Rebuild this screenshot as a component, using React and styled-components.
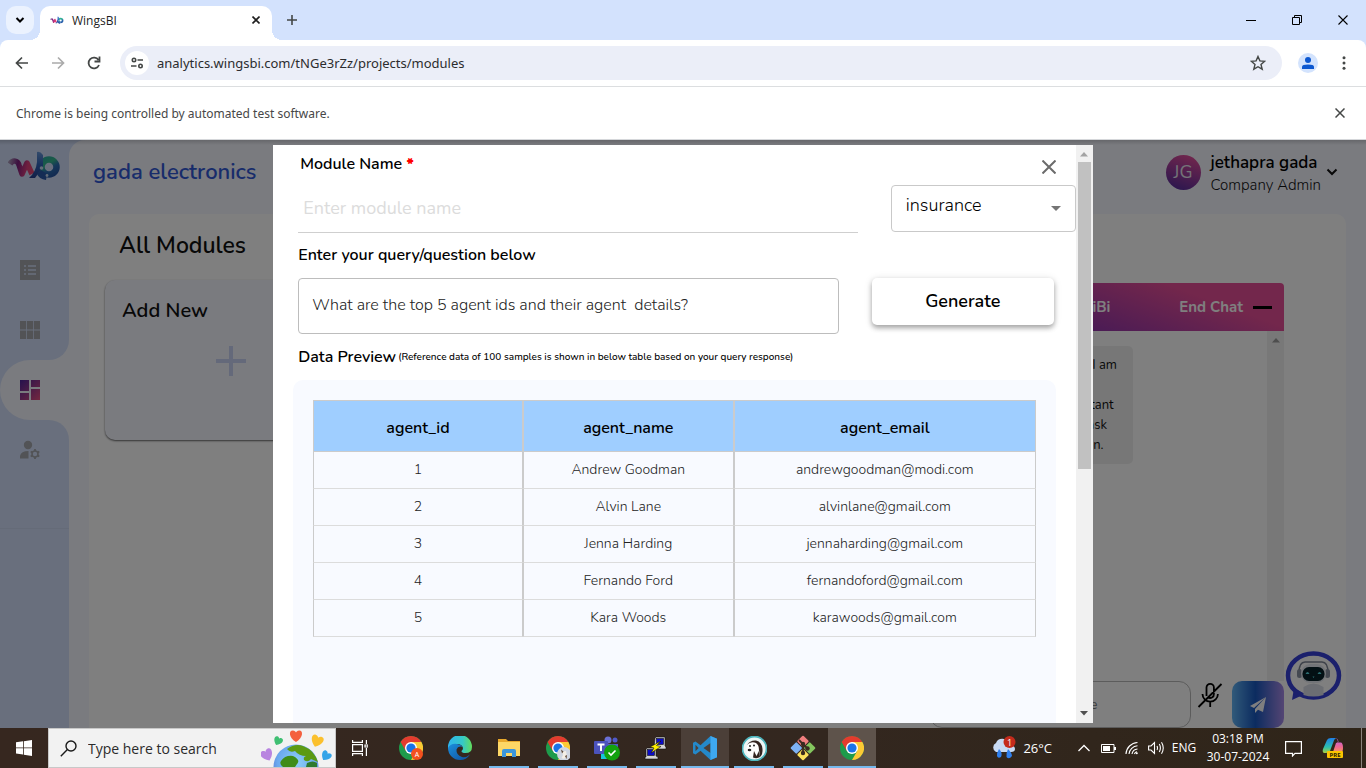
import React from "react";
import styled, { createGlobalStyle } from "styled-components";

const APP_FONT = `Nunito, Lato, "Open Sans", sans-serif`;
const UI_FONT = `"Segoe UI", "Open Sans", "Noto Sans", sans-serif`;
const BAR_FONT = `"Segoe UI", "Noto Sans", "Open Sans", sans-serif`;
const RAIL = "#d2dffa";
const PAGE = "#f4f6ff";

const Global = createGlobalStyle`
  *, *::before, *::after { box-sizing: border-box; }
  body { margin: 0; font-family: ${UI_FONT}; }
  button, input, select, textarea { font: inherit; color: inherit; }
  button { border: 0; padding: 0; background: none; cursor: pointer; }
  svg { display: block; flex: none; }
  h1, h2, h3, p { margin: 0; }
`;

const Screen = styled.div`
  height: 100vh;
  display: flex;
  flex-direction: column;
  overflow: hidden;
`;

/* ---------- browser chrome ---------- */

const TabStrip = styled.header`
  height: 40px;
  flex: none;
  display: flex;
  background: #d3e2fd;
`;

const TabSearch = styled.button`
  width: 28px;
  height: 28px;
  margin: 6px;
  border-radius: 10px;
  background: #ebf2fe;
  display: grid;
  place-items: center;
`;

const Tab = styled.div`
  position: relative;
  width: 232px;
  height: 34px;
  margin-top: 6px;
  padding: 0 8px 6px 10px;
  display: flex;
  align-items: center;
  gap: 8px;
  border-radius: 10px 10px 0 0;
  background: #fff;
  font-size: 12px;
  color: #1f1f1f;

  &::before, &::after {
    content: "";
    position: absolute;
    bottom: 0;
    width: 10px;
    height: 10px;
  }
  &::before {
    left: -10px;
    background: radial-gradient(circle at 0 0, transparent 10px, #fff 10px);
  }
  &::after {
    right: -10px;
    background: radial-gradient(circle at 100% 0, transparent 10px, #fff 10px);
  }
  span { flex: 1; }
`;

const IconButton = styled.button`
  width: ${(p) => p.$w || 28}px;
  height: ${(p) => p.$h || 28}px;
  display: grid;
  place-items: center;
  flex: none;
  color: ${(p) => p.$color || "#444746"};
`;

const NewTab = styled(IconButton)`
  margin: 6px;
`;

const WindowControls = styled.div`
  margin-left: auto;
  display: flex;
`;

const ToolbarBack = styled.div`
  background: #d3e2fd;
  flex: none;
`;

const Toolbar = styled.nav`
  height: 47px;
  padding: 0 8px;
  display: flex;
  align-items: center;
  gap: 8px;
  border-bottom: 1px solid #dcdee0;
  border-radius: 8px 8px 0 0;
  background: #fff;
`;

const Address = styled.div`
  flex: 1;
  height: 34px;
  margin-left: 4px;
  padding: 0 10px 0 5px;
  display: flex;
  align-items: center;
  gap: 8px;
  border-radius: 17px;
  background: #ebeef8;

  input {
    flex: 1;
    min-width: 0;
    border: 0;
    padding: 0;
    outline: 0;
    background: none;
    font-family: ${BAR_FONT};
    font-size: 13px;
    color: #2b2c2e;
  }
`;

const SiteInfo = styled(IconButton)`
  width: 24px;
  height: 24px;
  border-radius: 50%;
  background: #fff;
`;

const Profile = styled.button`
  width: 20px;
  height: 20px;
  margin: 0 4px 0 8px;
  border-radius: 50%;
  background: #d3e3fd;
  display: grid;
  place-items: center;
`;

const InfoBar = styled.div`
  height: 53px;
  flex: none;
  padding: 0 12px 0 16px;
  display: flex;
  align-items: center;
  justify-content: space-between;
  border-bottom: 1px solid #d5d7da;
  background: #fff;
  font-family: ${BAR_FONT};
  font-size: 12px;
  color: #474747;
`;

/* ---------- application ---------- */

const AppArea = styled.div`
  position: relative;
  flex: 1;
  min-height: 0;
  display: flex;
  overflow: hidden;
  background: ${RAIL};
  font-family: ${APP_FONT};
`;

const Rail = styled.aside`
  width: 69px;
  flex: none;
  display: flex;
  flex-direction: column;
  background: ${PAGE};
  color: #a4a6ac;
`;

const RailTop = styled.div`
  height: 220px;
  padding: 8px 0 0 8px;
  display: flex;
  flex-direction: column;
  border-bottom-right-radius: 20px;
  background: ${RAIL};
`;

const RailLink = styled.a`
  height: 60px;
  padding-left: 20px;
  display: flex;
  align-items: center;
  color: inherit;
`;

const RailLinks = styled.div`
  margin: auto 0 0 -8px;
`;

const RailActive = styled.div`
  background: ${RAIL};
  ${RailLink} {
    border-radius: 30px 0 0 30px;
    background: ${PAGE};
  }
`;

const RailBottom = styled.div`
  flex: 1;
  border-top-right-radius: 20px;
  background: ${RAIL};
`;

const RailRule = styled.div`
  height: 49px;
  border-bottom: 1px solid #cbd6f0;
`;

const Main = styled.main`
  flex: 1;
  min-width: 0;
  padding: 0 20px;
  display: flex;
  flex-direction: column;
  border-top-left-radius: 16px;
  background: ${PAGE};
`;

const PageHeader = styled.header`
  height: 64px;
  margin-bottom: 10px;
  padding: 0 8px 0 4px;
  display: flex;
  align-items: center;
  justify-content: space-between;
  flex: none;
`;

const Company = styled.h1`
  font-size: 22px;
  font-weight: 600;
  line-height: 28px;
  color: #3158d6;
`;

const User = styled.button`
  display: flex;
  align-items: center;
  gap: 10px;
  text-align: left;
  color: #111;
  > svg { margin-left: -5px; }
`;

const Avatar = styled.span`
  width: 35px;
  height: 35px;
  border-radius: 50%;
  display: grid;
  place-items: center;
  background: linear-gradient(200deg, #f0509a, #4a2a9e);
  color: #e8e8f0;
  font-size: 18px;
`;

const UserText = styled.span`
  display: grid;
  padding-top: 4px;
  strong { font-size: 17px; line-height: 22px; font-weight: 600; color: #000; }
  small { font-size: 15px; line-height: 22px; font-weight: 300; }
`;

const Board = styled.section`
  flex: 1;
  min-height: 0;
  padding: 0 62px 0 16px;
  display: flex;
  justify-content: space-between;
  border-radius: 10px 10px 0 0;
  background: #fff;
`;

const Modules = styled.div`
  padding-top: 17px;
  h2 { padding-left: 14px; margin-bottom: 19px; font-size: 23px; line-height: 30px; font-weight: 600; color: #111; }
`;

const AddCard = styled.button`
  width: 252px;
  height: 160px;
  padding: 17px;
  display: flex;
  flex-direction: column;
  align-items: flex-start;
  border-radius: 10px;
  background: ${PAGE};
  box-shadow: 0 1px 2px rgba(0, 0, 0, 0.6);
  font-size: 20px;
  font-weight: 600;
  line-height: 28px;
  color: #111;
  svg { align-self: center; margin-top: 21px; }
`;

const Chat = styled.aside`
  width: 354px;
  margin-top: 69px;
  display: flex;
  flex-direction: column;
`;

const ChatHead = styled.header`
  height: 48px;
  padding: 0 12px 0 145px;
  display: flex;
  align-items: center;
  gap: 10px;
  border-radius: 4px 4px 0 0;
  background: linear-gradient(20deg, #7a2fb0 20%, #e64e98 75%);
  color: #fff;
  font-size: 15px;
  font-weight: 700;
  span { margin-right: auto; }
`;

const ChatBody = styled.div`
  flex: 1;
  min-height: 0;
  display: flex;
  justify-content: space-between;
`;

const Bubble = styled.p`
  width: 180px;
  height: 118px;
  margin: 15px 0 0 23px;
  padding: 9px 16px;
  border-radius: 5px;
  background: #efefef;
  font-size: 13px;
  line-height: 20px;
  text-align: right;
  white-space: pre;
  color: #111;
`;

const ScrollTrack = styled.div`
  width: 17px;
  flex: none;
  padding: 7px 0;
  display: flex;
  flex-direction: column;
  align-items: center;
  background: #f1f1f1;
`;

const ScrollThumb = styled.div`
  width: 13px;
  height: 307px;
  margin: 5px 0 auto;
  background: #c1c1c1;
`;

const ChatForm = styled.form`
  height: 47px;
  display: flex;
  input {
    width: 261px;
    padding: 0 14px;
    border: 1px solid #b8b8b8;
    border-radius: 12px;
    background: #fff;
    font-size: 14px;
    outline: 0;
  }
  input::placeholder { color: #75787c; opacity: 1; }
`;

const Mic = styled(IconButton)`
  width: 41px;
  padding-right: 3px;
  color: #000;
`;

const Send = styled.button`
  flex: 1;
  display: grid;
  place-items: center;
  border-radius: 10px;
  background: linear-gradient(90deg, #62b4f4, #1858c0 45%, #a98be8);
`;

const Bot = styled.button`
  position: absolute;
  right: 24px;
  bottom: 27px;
`;

/* ---------- dialog ---------- */

const Backdrop = styled.div`
  position: absolute;
  inset: 0;
  padding: 5px 0;
  display: flex;
  justify-content: center;
  background: linear-gradient(rgba(0, 0, 0, 0.16), transparent 5px), rgba(0, 0, 0, 0.5);
`;

const Dialog = styled.section`
  width: 60%;
  display: flex;
  background: #fff;
  overflow: hidden;
`;

const DialogBody = styled.div`
  flex: 1;
  min-width: 0;
  padding-left: 25px;
  color: #000;
  overflow: hidden;
`;

const NameRow = styled.div`
  display: flex;
  justify-content: space-between;
`;

const NameField = styled.div`
  width: 560px;
  padding-top: 8px;
  label { display: block; padding-left: 2px; font-size: 16px; line-height: 22px; font-weight: 600; }
  b { color: #f00; }
  input {
    display: block;
    width: 100%;
    height: 48px;
    margin-top: 10px;
    padding: 0 5px 2px;
    border: 0;
    border-bottom: 1px solid #cfcfcf;
    outline: 0;
    background: none;
    font-size: 18px;
  }
  input::placeholder { color: #dcdcdc; opacity: 1; }
`;

const SideField = styled.div`
  width: 185px;
  display: flex;
  flex-direction: column;
`;

const CloseDialog = styled(IconButton)`
  margin: 8px 13px 4px auto;
  color: #6b6b6b;
`;

const SelectBox = styled.div`
  position: relative;
  select {
    width: 100%;
    height: 47px;
    padding: 0 40px 8px 14px;
    border: 1px solid #c9c9c9;
    border-radius: 4px;
    appearance: none;
    background: #fff;
    outline: 0;
    font-size: 18px;
    font-weight: 350;
  }
  svg { position: absolute; right: 15px; top: 21px; pointer-events: none; }
`;

const SectionLabel = styled.label`
  display: block;
  margin-top: 11px;
  font-size: 16px;
  line-height: 22px;
  font-weight: 600;
`;

const QueryRow = styled.div`
  margin: 12px 22px 12px 0;
  display: flex;
  align-items: flex-start;
  justify-content: space-between;
  textarea {
    width: 541px;
    height: 56px;
    padding: 15px 13px;
    display: block;
    border: 1px solid #bdbdbd;
    border-radius: 4px;
    resize: none;
    outline: 0;
    overflow: hidden;
    font-size: 16px;
    font-weight: 350;
    line-height: 22px;
    color: #222;
  }
`;

const Generate = styled.button`
  width: 182px;
  height: 47px;
  padding-bottom: 2px;
  border-radius: 5px;
  background: #fff;
  box-shadow: 0 3px 5px rgba(0, 0, 0, 0.3), 0 1px 8px rgba(0, 0, 0, 0.12);
  font-size: 18px;
  font-weight: 600;
`;

const PreviewTitle = styled.h3`
  display: flex;
  align-items: center;
  gap: 2px;
  font-size: 16px;
  line-height: 22px;
  font-weight: 600;
  small { font-size: 10px; font-weight: 500; }
`;

const PreviewPanel = styled.div`
  height: 400px;
  margin: 12px 20px 0 -5px;
  padding: 20px;
  border-radius: 10px;
  background: #f8faff;
`;

const DataTable = styled.table`
  width: 100%;
  table-layout: fixed;
  border-collapse: separate;
  border-spacing: 0;
  text-align: center;

  th, td { padding: 0; border: 1px solid #cbcbcb; }
  th { height: 52px; padding-top: 4px; background: #9fceff; font-size: 16px; font-weight: 600; }
  th:first-child { width: 29%; }
  th:last-child { width: 302px; }
  td { height: 37px; padding-bottom: 2px; border-top: 0; border-bottom-color: #dcdcdc; font-size: 14px; font-weight: 350; color: #222; }
`;

/* ---------- taskbar ---------- */

const Taskbar = styled.footer`
  height: 40px;
  flex: none;
  display: flex;
  background: linear-gradient(90deg, #36271f, #33271f 60%, #2f2519);
  color: #fff;
`;

const TaskSearch = styled.label`
  width: 288px;
  padding-left: 11px;
  display: flex;
  align-items: center;
  gap: 11px;
  border: 1px solid #c8c8c8;
  background: #f2f2f2;
  color: #1a1a1a;
  input {
    flex: 1;
    min-width: 0;
    padding: 0;
    border: 0;
    outline: 0;
    background: none;
    font-size: 14px;
  }
  input::placeholder { color: #2b2b2b; opacity: 1; }
`;

const TaskIcons = styled.div`
  margin-left: 3px;
  display: flex;
  gap: 1px;
`;

const TaskButton = styled.button`
  width: 48px;
  height: 40px;
  display: grid;
  place-items: center;
  background: ${(p) => p.$bg || "none"};
  box-shadow: ${(p) => (p.$wide ? "inset 0 -2px #76b9ed" : "none")};
  background-image: ${(p) => (p.$open && !p.$wide ? "linear-gradient(#76b9ed, #76b9ed)" : "none")};
  background-size: 40px 2px;
  background-position: bottom center;
  background-repeat: no-repeat;
`;

const Tray = styled.div`
  margin-left: auto;
  display: flex;
  align-items: center;
`;

const TrayItem = styled.button`
  width: ${(p) => p.$w || 24}px;
  height: 40px;
  display: grid;
  place-items: center;
  align-content: center;
  font-size: 12px;
  line-height: 18px;
  white-space: nowrap;
`;

const Weather = styled.button`
  margin-right: 20px;
  display: flex;
  align-items: center;
  gap: 6px;
  font-size: 13px;
`;

const ShowDesktop = styled.button`
  width: 5px;
  height: 40px;
  margin-left: 5px;
  border-left: 1px solid #8a837c;
`;

/* ---------- icons ---------- */

const Line = ({ size = 16, w = 1.5, children, ...rest }) => (
  <svg width={size} height={size} viewBox={`0 0 ${size} ${size}`} fill="none" stroke="currentColor" strokeWidth={w} {...rest}>
    {children}
  </svg>
);

const Cross = ({ size = 10, w = 1.2 }) => (
  <Line size={size} w={w}>
    <path d={`M.5 .5 L${size - 0.5} ${size - 0.5} M${size - 0.5} .5 L.5 ${size - 0.5}`} />
  </Line>
);

const Brand = ({ width, height, id }) => (
  <svg width={width} height={height} viewBox="0 0 54 34" fill="none">
    <defs>
      <linearGradient id={`${id}a`} gradientUnits="userSpaceOnUse" x1="1" x2="30" y1="14" y2="20">
        <stop offset="0" stopColor="#a898b8" />
        <stop offset=".3" stopColor="#7a2080" />
        <stop offset=".65" stopColor="#e0407e" />
        <stop offset="1" stopColor="#f0506e" />
      </linearGradient>
      <linearGradient id={`${id}b`} gradientUnits="userSpaceOnUse" x1="30" x2="28" y1="3" y2="30">
        <stop offset="0" stopColor="#6a98d8" />
        <stop offset=".5" stopColor="#2f62b8" />
        <stop offset="1" stopColor="#274090" />
      </linearGradient>
      <linearGradient id={`${id}c`} gradientUnits="userSpaceOnUse" x1="36" x2="48" y1="9" y2="28">
        <stop offset="0" stopColor="#2ca8a0" />
        <stop offset=".35" stopColor="#35b890" />
        <stop offset=".6" stopColor="#2c70b4" />
        <stop offset="1" stopColor="#2450a0" />
      </linearGradient>
    </defs>
    <path d="M2 16 C5 11 10 13 11 17 L14 26 L19 15 L24 26" stroke={`url(#${id}a)`} strokeWidth="5.500" strokeLinejoin="round" />
    <circle cx="41" cy="19" r="7.500" stroke={`url(#${id}c)`} strokeWidth="6.500" />
    <path d="M29 4 Q32 3 35 7 V19 L27 30 L21 30 Q28 24 29 14 Z" fill={`url(#${id}b)`} />
    <path d="M33 22 L39 26 L38 32 Q31 31 29 26 Z" fill="#2a58a8" />
    <circle cx="33.500" cy="20" r="1.800" fill="#c9d9ef" />
    <circle cx="39" cy="27.500" r="1.400" fill="#c9d9ef" />
  </svg>
);

const ChromeLogo = ({ children }) => (
  <svg width="24" height="24" viewBox="0 0 24 24">
    <circle cx="12" cy="12" r="12" fill="#1e9b4b" />
    <path d="M12 0 A12 12 0 0 1 22.400 6 L12 6 L6.800 15 L1.600 6 A12 12 0 0 1 12 0" fill="#e33b2e" />
    <path d="M22.400 6 A12 12 0 0 1 12 24 L17.200 15 L12 6 Z" fill="#fcc934" />
    <circle cx="12" cy="12" r="6" fill="#fff" />
    <circle cx="12" cy="12" r="4.600" fill="#1a73e8" />
    {children}
  </svg>
);

const EdgeLogo = () => (
  <svg width="24" height="24" viewBox="0 0 24 24">
    <defs>
      <linearGradient id="edgeTop" x1="0" x2="1"><stop offset="0" stopColor="#2fb5ee" /><stop offset=".6" stopColor="#35c8c8" /><stop offset="1" stopColor="#62dc5c" /></linearGradient>
      <linearGradient id="edgeLow" x1="0" x2="1" y1="0" y2="1"><stop offset="0" stopColor="#1b8fdc" /><stop offset="1" stopColor="#0f4f9e" /></linearGradient>
    </defs>
    <path d="M0 11 A12 12 0 0 1 24 11 Q24 17 17.500 17 Q13.500 17 13.500 15 Q15 14 15 12 Q14 8 9 8 Q3 8 0 13 Z" fill="url(#edgeTop)" />
    <path d="M0 12 Q3 7 9 8 Q13 8.500 14.500 11 Q10 9.500 8.500 13.500 Q8 19 14 21 Q18 22 22 18.500 Q18.500 24 12 24 A12 12 0 0 1 0 12" fill="url(#edgeLow)" />
  </svg>
);

const FolderIcon = () => (
  <svg width="22" height="20" viewBox="0 0 22 20">
    <path d="M0 1 H8 L10 3 H22 V18 H0 Z" fill="#e9a92c" />
    <path d="M0 4 H22 V18 H0 Z" fill="#fdd766" />
    <path d="M4 19 V13 Q4 11 6 11 H16 Q18 11 18 13 V19 H14 V15 H8 V19 Z" fill="#3c96dc" />
  </svg>
);

const TeamsIcon = () => (
  <svg width="26" height="26" viewBox="0 0 26 26">
    <circle cx="14" cy="5" r="3.500" fill="#6a70d6" />
    <circle cx="21" cy="5" r="2.500" fill="#5059c9" />
    <path d="M10 9 H24 V17 Q22 21 18 21 H10 Z" fill="#5059c9" />
    <rect x="7" y="17" width="8" height="7" fill="#16c8d8" />
    <rect x="0" y="6" width="14" height="13" rx="1" fill="#4b53bc" />
    <path d="M3.500 9.500 H10.500 M7 9.500 V16" stroke="#fff" strokeWidth="2" />
    <circle cx="18" cy="17.500" r="8" fill="#13a10e" />
    <path d="M14.500 17.500 L17 20 L21.500 15.500" stroke="#fff" strokeWidth="1.600" fill="none" />
  </svg>
);

const PuttyIcon = () => (
  <svg width="24" height="24" viewBox="0 0 24 24" stroke="#111" strokeWidth=".6">
    <path d="M11 2 L12 1 H21 V10 L22 11 V13 H11 V11 H10 Z" fill="#d4d4d4" />
    <rect x="12.500" y="2.500" width="7" height="6" fill="#0a0ac8" />
    <path d="M2 13 L3 12 H12 V20 L14 21 V23 H1 V21 H2 Z" fill="#d4d4d4" />
    <rect x="3.500" y="13.500" width="7" height="6" fill="#0a0ac8" />
    <path d="M17 5 L6 11 L10 12 L7 17 L17 10.500 L12.500 9.500 Z" fill="#fff000" />
  </svg>
);

const CodeIcon = () => (
  <svg width="24" height="24" viewBox="0 0 24 24">
    <path d="M17.500 0 L24 2.800 V21.200 L17.500 24 L7.500 14.700 L2.500 18.500 L0 17.200 V6.800 L2.500 5.500 L7.500 9.300 Z M17.500 7 L10.500 12 L17.500 17 Z M2.500 8.800 V15.200 L5.600 12 Z" fill="#2489ca" fillRule="evenodd" />
    <path d="M17.500 0 L24 2.800 V21.200 L17.500 24 Z" fill="#3ea8f0" />
  </svg>
);

const DBeaverIcon = () => (
  <svg width="25" height="25" viewBox="0 0 25 25">
    <circle cx="12.500" cy="12.500" r="12" fill="#eef6f6" stroke="#4eb5bd" strokeWidth="1.800" />
    <path d="M5 9 Q8 4 14 4.500 Q20 6 20.500 13 Q21 18 18 21 L17.500 16.500 L16 9 L7 7.500 Z" fill="#32231f" />
    <path d="M5 17 Q3.500 12 6 8 Q10 5 14 7 Q17 9 16.500 14 L14 20 L12 16 L11 20.500 Q6 21 5 17" fill="#fdfdfd" />
    <path d="M12 15 L14.500 20 L17 15 L18 21 Q15 23 11 21.500 Z" fill="#32231f" />
    <circle cx="8" cy="10" r="1" fill="#222" />
    <circle cx="12" cy="9.500" r="1" fill="#222" />
    <ellipse cx="7.500" cy="14" rx="1.800" ry="1.300" fill="#222" />
  </svg>
);

const GitIcon = () => (
  <svg width="26" height="26" viewBox="0 0 26 26">
    <g transform="rotate(45 13 13)" strokeLinejoin="round">
      <rect x="4" y="4" width="8.500" height="8.500" rx="1" fill="#f07f7f" />
      <rect x="13.500" y="4" width="8.500" height="8.500" rx="1" fill="#84c65e" />
      <rect x="4" y="13.500" width="8.500" height="8.500" rx="1" fill="#7db2f5" />
      <rect x="13.500" y="13.500" width="8.500" height="8.500" rx="1" fill="#fbe05c" />
    </g>
    <path d="M9 5 L13 9 V19 M13 9 L17.500 13.500" stroke="#3a2a20" strokeWidth="1.800" fill="none" />
    <circle cx="13" cy="9" r="2.200" fill="#3a2a20" />
    <circle cx="13" cy="18" r="2.200" fill="#3a2a20" />
    <circle cx="17.500" cy="13.500" r="2.200" fill="#3a2a20" />
  </svg>
);

const Heart = ({ x, y, s, r, fill }) => (
  <path
    transform={`translate(${x} ${y}) rotate(${r}) scale(${s})`}
    d="M0 5.500 C-7 1 -6.500 -5 -3 -5 C-1 -5 0 -3.500 0 -3 C0 -3.500 1 -5 3 -5 C6.500 -5 7 1 0 5.500"
    fill={fill}
  />
);

const EarthArt = () => (
  <svg width="74" height="38" viewBox="0 0 74 38">
    <defs>
      <radialGradient id="sea" cx=".5" cy=".4" r=".6">
        <stop offset="0" stopColor="#8fd0f8" />
        <stop offset=".7" stopColor="#6aa8ee" />
        <stop offset="1" stopColor="#5a78d0" />
      </radialGradient>
    </defs>
    <circle cx="35" cy="38" r="22.500" fill="url(#sea)" />
    <path d="M26 20 Q34 14 42 17 Q53 21 57 33 L50 30 Q47 34 43 31 Q42 28 45 27 Q38 27 34 22 Q29 24 26 20" fill="#5c9a12" />
    <path d="M20 32 Q24 26 32 27 Q40 31 36 35 L34 38 H22 Q18 35 20 32" fill="#3f8c18" />
    <path d="M46 34 Q52 31 56 34 V38 H45 Z" fill="#2f7a30" />
    <Heart x={6} y={26} s={1.1} r={-25} fill="#b884e0" />
    <Heart x={17} y={12} s={0.8} r={25} fill="#3fbf72" />
    <Heart x={35} y={7} s={1.1} r={0} fill="#f4603e" />
    <Heart x={56} y={12} s={1.1} r={20} fill="#fbc02d" />
    <Heart x={65} y={27} s={0.9} r={35} fill="#34a4e8" />
  </svg>
);

const ScrollArrow = ({ down, color = "#a3a3a3" }) => (
  <svg width="8" height="5" viewBox="0 0 8 5">
    <path d={down ? "M0 0 H8 L4 4.500 Z" : "M0 4.500 H8 L4 0 Z"} fill={color} />
  </svg>
);

const agents = [
  [1, "Andrew Goodman", "andrewgoodman@modi.com"],
  [2, "Alvin Lane", "alvinlane@gmail.com"],
  [3, "Jenna Harding", "jennaharding@gmail.com"],
  [4, "Fernando Ford", "fernandoford@gmail.com"],
  [5, "Kara Woods", "karawoods@gmail.com"],
];

function BrowserChrome() {
  return (
    <>
      <TabStrip>
        <TabSearch aria-label="Search tabs">
          <Line size={10} w={2}><path d="M1.500 3 L5 6.500 L8.500 3" /></Line>
        </TabSearch>
        <Tab>
          <Brand width={14} height={10} id="fav" />
          <span>WingsBI</span>
          <IconButton $w={16} $h={16} $color="#1f1f1f" aria-label="Close tab"><Cross size={8} w={1.6} /></IconButton>
        </Tab>
        <NewTab aria-label="New tab">
          <Line size={12} w={1.6}><path d="M6 1 V11 M1 6 H11" /></Line>
        </NewTab>
        <WindowControls>
          <IconButton $w={46} $h={40} $color="#000" aria-label="Minimize">
            <Line size={10} w={1}><path d="M0 5.500 H10" /></Line>
          </IconButton>
          <IconButton $w={46} $h={40} $color="#000" aria-label="Restore">
            <Line size={10} w={1}><path d="M.5 2.500 H7.500 V9.500 H.5 Z M2.500 2 V.5 H9.500 V7.500 H8" /></Line>
          </IconButton>
          <IconButton $w={46} $h={40} $color="#000" aria-label="Close"><Cross size={10} w={1.1} /></IconButton>
        </WindowControls>
      </TabStrip>
      <ToolbarBack>
        <Toolbar>
          <IconButton aria-label="Back">
            <Line size={14} w={1.7}><path d="M13 7 H2 M7 1.500 L1.500 7 L7 12.500" /></Line>
          </IconButton>
          <IconButton $color="#ababab" aria-label="Forward">
            <Line size={14} w={1.7}><path d="M1 7 H12 M7 1.500 L12.500 7 L7 12.500" /></Line>
          </IconButton>
          <IconButton aria-label="Reload">
            <Line size={14} w={1.8}><path d="M12 9 A5.400 5.400 0 1 1 11.500 4 M12.500 .5 V5.500 H7.500" /></Line>
          </IconButton>
          <Address>
            <SiteInfo aria-label="Site information">
              <Line size={14} w={1.6}><circle cx="4" cy="4" r="1.700" /><path d="M7.500 4 H13 M1 10 H6.500" /><circle cx="10.500" cy="10" r="1.700" /></Line>
            </SiteInfo>
            <input aria-label="Address" defaultValue="analytics.wingsbi.com/tNGe3rZz/projects/modules" />
            <IconButton aria-label="Bookmark">
              <Line size={16} w={1.4}><path d="M8 1.500 L9.900 5.900 L14.700 6.300 L11 9.500 L12.200 14.200 L8 11.700 L3.800 14.200 L5 9.500 L1.300 6.300 L6.100 5.900 Z" /></Line>
            </IconButton>
          </Address>
          <Profile aria-label="Profile">
            <svg width="12" height="12" viewBox="0 0 12 12" fill="#0b57d0"><circle cx="6" cy="3" r="3" /><path d="M0 12 V9.800 Q0 7.500 6 7.500 Q12 7.500 12 9.800 V12 Z" /></svg>
          </Profile>
          <IconButton aria-label="Menu">
            <svg width="4" height="14" viewBox="0 0 4 14" fill="#444746"><circle cx="2" cy="1.700" r="1.500" /><circle cx="2" cy="7" r="1.500" /><circle cx="2" cy="12.300" r="1.500" /></svg>
          </IconButton>
        </Toolbar>
      </ToolbarBack>
      <InfoBar>
        <span>Chrome is being controlled by automated test software.</span>
        <IconButton aria-label="Dismiss"><Cross size={10} w={1.5} /></IconButton>
      </InfoBar>
    </>
  );
}

function SideRail() {
  return (
    <Rail>
      <RailTop>
        <Brand width={54} height={34} id="logo" />
        <RailLinks>
          <RailLink href="#list" aria-label="List">
            <svg width="20" height="20" viewBox="0 0 20 20">
              <path d="M0 0 H20 V20 H0 Z" fill="currentColor" />
              <path d="M4 6 H6 M8 6 H16 M4 10 H6 M8 10 H16 M4 14 H6 M8 14 H16" stroke={RAIL} strokeWidth="1.500" />
            </svg>
          </RailLink>
          <RailLink href="#grid" aria-label="Grid">
            <svg width="20" height="20" viewBox="0 0 20 20" fill="currentColor">
              <path d="M0 1 H6.200 V9.500 H0 Z M7 1 H13 V9.500 H7 Z M13.800 1 H20 V9.500 H13.800 Z M0 10.500 H6.200 V19 H0 Z M7 10.500 H13 V19 H7 Z M13.800 10.500 H20 V19 H13.800 Z" />
            </svg>
          </RailLink>
        </RailLinks>
      </RailTop>
      <RailActive>
        <RailLink href="#modules" aria-label="Modules">
          <svg width="20" height="20" viewBox="0 0 20 20">
            <defs><linearGradient id="dash" x1="0" y1="0" x2="1" y2="1"><stop offset="0" stopColor="#4a249c" /><stop offset="1" stopColor="#e84f80" /></linearGradient></defs>
            <path d="M0 0 H9 V11 H0 Z M11 0 H20 V7 H11 Z M0 13 H9 V20 H0 Z M11 9 H20 V20 H11 Z" fill="url(#dash)" />
          </svg>
        </RailLink>
      </RailActive>
      <RailBottom>
        <RailLink href="#admin" aria-label="Administration">
          <svg width="20" height="20" viewBox="0 0 20 20">
            <circle cx="8" cy="5" r="4.200" fill="currentColor" />
            <path d="M0 18.500 V16 Q1 11 8.500 11 V18.500 Z" fill="currentColor" />
            <circle cx="15" cy="14" r="3" fill="none" stroke="currentColor" strokeWidth="1.600" />
            <path d="M15 9 V11 M15 17 V19 M10.700 11.500 L12.400 12.500 M17.600 15.500 L19.300 16.500 M10.700 16.500 L12.400 15.500 M17.600 12.500 L19.300 11.500" stroke="currentColor" strokeWidth="1.800" />
          </svg>
        </RailLink>
        <RailRule />
      </RailBottom>
    </Rail>
  );
}

function ModulesPage() {
  return (
    <Main>
      <PageHeader>
        <Company>gada electronics</Company>
        <User>
          <Avatar>JG</Avatar>
          <UserText>
            <strong>jethapra gada</strong>
            <small>Company Admin</small>
          </UserText>
          <Line size={12} w={2}><path d="M1.500 3.500 L6 8 L10.500 3.500" /></Line>
        </User>
      </PageHeader>
      <Board>
        <Modules>
          <h2>All Modules</h2>
          <AddCard>
            Add New
            <svg width="30" height="30" viewBox="0 0 30 30"><path d="M15 0 V30 M0 15 H30" stroke="#c8d2f4" strokeWidth="4" /></svg>
          </AddCard>
        </Modules>
        <Chat>
          <ChatHead>
            <span>WiBi</span>
            <button>End Chat</button>
            <svg width="19" height="3" viewBox="0 0 19 3"><path d="M0 0 H19 V3 H0 Z" fill="#000" /></svg>
          </ChatHead>
          <ChatBody>
            <Bubble>{"Hello, I am\n\nassistant \nask   \nquestion.    "}</Bubble>
            <ScrollTrack><ScrollArrow color="#9c9c9c" /></ScrollTrack>
          </ChatBody>
          <ChatForm>
            <input aria-label="Message" placeholder="Type your message here" />
            <Mic type="button" aria-label="Microphone">
              <Line size={26} w={1.8}>
                <path d="M9.500 14 V5.500 A3.700 3.700 0 0 1 16.900 5.500 V12 A3.700 3.700 0 0 1 11 15.200 M5.500 12 A7.700 7.700 0 0 0 13.200 19.700 A7.700 7.700 0 0 0 20.900 12 M13.200 19.700 V25 M24.500 2 L1.500 25" />
              </Line>
            </Mic>
            <Send type="button" aria-label="Send">
              <svg width="16" height="16" viewBox="0 0 16 16" fill="#fff"><path d="M16 0 L0 9 L4 11 Z M16 0 L5 12 V16 L8 12.800 L13 15 Z" /></svg>
            </Send>
          </ChatForm>
        </Chat>
      </Board>
      <Bot aria-label="Open assistant">
        <svg width="57" height="50" viewBox="0 0 57 50">
          <ellipse cx="28.500" cy="24.500" rx="25.500" ry="22" fill="none" stroke="#3640d8" strokeWidth="4.500" />
          <path d="M9 37 L7 49 L20 43 Z" fill="#3640d8" />
          <path d="M14 22 Q14 11 20 11 H37 Q43 11 43 22" fill="none" stroke="#7c8494" strokeWidth="1.500" />
          <rect x="12" y="18" width="5" height="9" rx="2.500" fill="#8a93a3" />
          <rect x="40" y="18" width="5" height="9" rx="2.500" fill="#8a93a3" />
          <rect x="16" y="13" width="25" height="19" rx="9" fill="#e4e8f0" />
          <rect x="17.500" y="16" width="22" height="14" rx="6.500" fill="#062028" />
          <path d="M20.500 23 Q22.500 19 24.500 23 Z M32.500 23 Q34.500 19 36.500 23 Z M27.500 25.500 H29.500 L28.500 27 Z" fill="#58d8e0" />
          <path d="M18.500 44 V36 Q28.500 29 38.500 36 V44 Q28.500 47 18.500 44" fill="#d8dce6" />
        </svg>
      </Bot>
    </Main>
  );
}

function ModuleDialog() {
  return (
    <Backdrop>
      <Dialog role="dialog" aria-label="Module">
        <DialogBody>
          <NameRow>
            <NameField>
              <label htmlFor="module-name">Module Name <b>*</b></label>
              <input id="module-name" placeholder="Enter module name" />
            </NameField>
            <SideField>
              <CloseDialog aria-label="Close"><Cross size={14} w={2} /></CloseDialog>
              <SelectBox>
                <select aria-label="Data source" defaultValue="insurance">
                  <option value="insurance">insurance</option>
                </select>
                <svg width="10" height="5" viewBox="0 0 10 5"><path d="M0 0 H10 L5 5 Z" fill="#757575" /></svg>
              </SelectBox>
            </SideField>
          </NameRow>
          <SectionLabel htmlFor="query">Enter your query/question below</SectionLabel>
          <QueryRow>
            <textarea id="query" defaultValue="What are the top 5 agent ids and their agent  details?" />
            <Generate>Generate</Generate>
          </QueryRow>
          <PreviewTitle>
            Data Preview
            <small>(Reference data of 100 samples is shown in below table based on your query response)</small>
          </PreviewTitle>
          <PreviewPanel>
            <DataTable>
              <thead>
                <tr><th>agent_id</th><th>agent_name</th><th>agent_email</th></tr>
              </thead>
              <tbody>
                {agents.map(([id, name, email]) => (
                  <tr key={id}><td>{id}</td><td>{name}</td><td>{email}</td></tr>
                ))}
              </tbody>
            </DataTable>
          </PreviewPanel>
        </DialogBody>
        <ScrollTrack>
          <ScrollArrow />
          <ScrollThumb />
          <ScrollArrow down color="#505050" />
        </ScrollTrack>
      </Dialog>
    </Backdrop>
  );
}

function WindowsTaskbar() {
  return (
    <Taskbar>
      <TaskButton aria-label="Start">
        <svg width="16" height="16" viewBox="0 0 16 16" fill="#fff"><path d="M0 2.300 L7 1.300 V7.500 H0 Z M7.800 1.200 L16 0 V7.500 H7.800 Z M0 8.300 H7 V14.600 L0 13.600 Z M7.800 8.300 H16 V16 L7.800 14.800 Z" /></svg>
      </TaskButton>
      <TaskSearch>
        <Line size={17} w={1.4}><circle cx="11" cy="6" r="5" /><path d="M7.400 9.600 L.8 16.200" /></Line>
        <input placeholder="Type here to search" aria-label="Type here to search" />
        <EarthArt />
      </TaskSearch>
      <TaskButton aria-label="Task view">
        <Line size={16} w={1.2}><path d="M.6 0 V2.400 H10.400 V0 M.6 4.600 H10.400 V11.400 H.6 Z M.6 16 V13.600 H10.400 V16 M14.400 0 V4 M14.400 8 V16 M13 5 H16 V7 H13 Z" /></Line>
      </TaskButton>
      <TaskIcons>
        <TaskButton aria-label="Chrome, profile A">
          <ChromeLogo>
            <circle cx="18" cy="18" r="6" fill="#f4511e" />
            <text x="18" y="20.500" fontSize="7" textAnchor="middle" fill="#fff">A</text>
          </ChromeLogo>
        </TaskButton>
        <TaskButton aria-label="Edge"><EdgeLogo /></TaskButton>
        <TaskButton $open aria-label="File Explorer"><FolderIcon /></TaskButton>
        <TaskButton $open aria-label="Chrome, second profile">
          <ChromeLogo>
            <circle cx="18" cy="18" r="7" fill="#cfd6e2" />
            <path d="M15 14 L17 15.500 L20 15 L21 21 Q18 24 15.500 22 L17 19 Z" fill="#f4efe6" />
            <path d="M15 13.500 L17.500 15.500 L16 17.500 Z M19 20 L21 19 L20.500 23 Z" fill="#5e4a3c" />
          </ChromeLogo>
        </TaskButton>
        <TaskButton $open aria-label="Teams"><TeamsIcon /></TaskButton>
        <TaskButton $open aria-label="PuTTY"><PuttyIcon /></TaskButton>
        <TaskButton $open $wide $bg="#4b3f38" aria-label="Visual Studio Code"><CodeIcon /></TaskButton>
        <TaskButton $open aria-label="DBeaver"><DBeaverIcon /></TaskButton>
        <TaskButton $open aria-label="Git"><GitIcon /></TaskButton>
        <TaskButton $open $wide $bg="#5e534b" aria-label="Chrome"><ChromeLogo /></TaskButton>
      </TaskIcons>
      <Tray>
        <Weather>
          <svg width="26" height="26" viewBox="0 0 26 26">
            <path d="M5 17 A5 5 0 0 1 5 8 Q7 3 13 4 Q19 4 20 10 Q24 11 24 14 Q24 17 20 17 Z" fill="#c8daf4" />
            <path d="M8 14 Q12 18 10 22 Q7 24 6 21 Q5.500 18 8 14 M17 14 Q21 18 21 21 Q18 25 15.500 22 Q15 18 17 14" fill="#2f80f0" />
            <circle cx="18.500" cy="7" r="6" fill="#c42b1c" />
            <text x="18.500" y="10.500" fontSize="9" textAnchor="middle" fill="#fff">1</text>
          </svg>
          26°C
        </Weather>
        <TrayItem aria-label="Hidden icons"><Line size={12} w={1.3}><path d="M.5 9 L6 3.500 L11.500 9" /></Line></TrayItem>
        <TrayItem aria-label="Battery">
          <svg width="15" height="9" viewBox="0 0 15 9" fill="none"><path d="M.5 .5 H13 V8.500 H.5 Z" stroke="#fff" /><path d="M2 2 H9 V7 H2 Z M13 3 H15 V6 H13 Z" fill="#fff" /></svg>
        </TrayItem>
        <TrayItem aria-label="Network">
          <Line size={14} w={1.1}><path d="M1 13 A12 12 0 0 1 12.500 1.500 M4 13 A9 9 0 0 1 12.500 4.800 M7 13 A6 6 0 0 1 12.500 8 M9.500 13 A3 3 0 0 1 12 10.800" /><circle cx="11.800" cy="12.200" r="1" fill="#fff" stroke="none" /></Line>
        </TrayItem>
        <TrayItem aria-label="Volume">
          <Line size={16} w={1.1}><path d="M.6 6 H3 L6.500 2.500 V13.500 L3 10 H.6 Z M9 6 Q10 8 9 10 M11.300 4 Q13.500 8 11.300 12 M13.500 2.300 Q17 8 13.500 13.700" /></Line>
        </TrayItem>
        <TrayItem $w={32}>ENG</TrayItem>
        <TrayItem $w={76}><span>03:18 PM</span><span>30-07-2024</span></TrayItem>
        <TrayItem $w={34} aria-label="Notifications"><Line size={17} w={1.2}><path d="M.6 1.600 H16.400 V13.400 H10 L7.500 16 V13.400 H.6 Z" /></Line></TrayItem>
        <TrayItem $w={46} aria-label="Copilot">
          <svg width="22" height="22" viewBox="0 0 22 22">
            <defs>
              <linearGradient id="copA" x1="0" x2="0" y1="0" y2="1"><stop offset="0" stopColor="#1f7fe8" /><stop offset=".6" stopColor="#2cc0b0" /><stop offset="1" stopColor="#a8d040" /></linearGradient>
              <linearGradient id="copB" x1="0" x2="0" y1="0" y2="1"><stop offset="0" stopColor="#b060f0" /><stop offset=".6" stopColor="#f06890" /><stop offset="1" stopColor="#f8a050" /></linearGradient>
            </defs>
            <path d="M5 3 Q6 1 9 1 H14 Q12 2 11 6 L8 14 Q7 16 4 16 H2 Q0 15 1 12 Z" fill="url(#copA)" />
            <path d="M13 1 Q16 1 16.500 5 L14 6 L11 15 H15 V16 H19 Q21 15 21 11 Q21 6 19 5.500 H16 Q15.500 1 13 1" fill="url(#copB)" />
            <rect x="5" y="14" width="16" height="7" rx="1" fill="#fbc400" />
            <text x="13" y="20" fontSize="6" fontWeight="700" textAnchor="middle" fill="#2b2200">PRE</text>
          </svg>
        </TrayItem>
        <ShowDesktop aria-label="Show desktop" />
      </Tray>
    </Taskbar>
  );
}

export default function App() {
  return (
    <Screen>
      <Global />
      <BrowserChrome />
      <AppArea>
        <SideRail />
        <ModulesPage />
        <ModuleDialog />
      </AppArea>
      <WindowsTaskbar />
    </Screen>
  );
}
